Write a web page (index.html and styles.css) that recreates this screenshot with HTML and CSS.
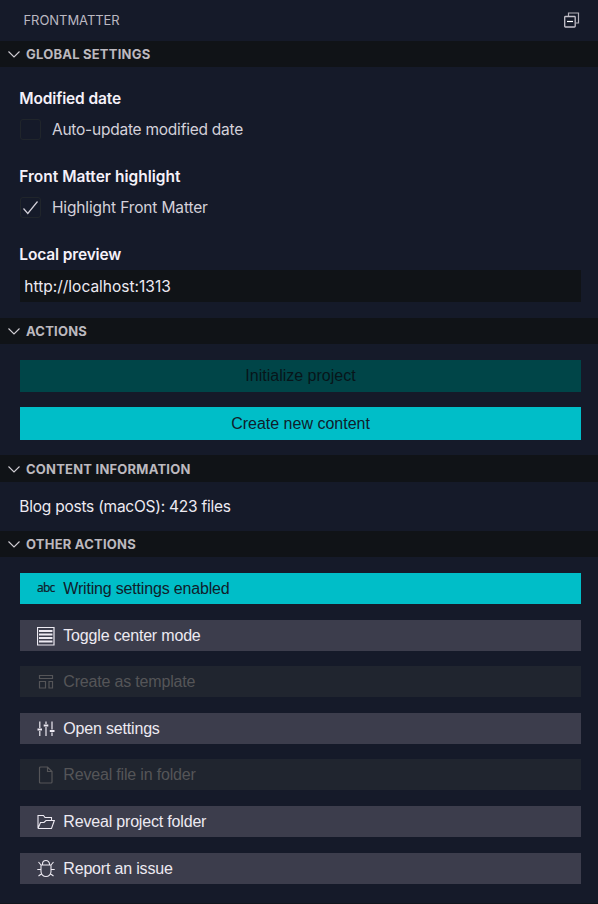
FILE: index.html
```html
<!DOCTYPE html>
<html lang="en">
<head>
<meta charset="utf-8">
<title>Front Matter</title>
<link rel="stylesheet" href="styles.css">
</head>
<body>
<main class="panel">
  <header class="panel-header">
    <span class="panel-title">FRONTMATTER</span>
    <svg class="collapse-all" width="16" height="16" viewBox="0 0 16 16" fill="none"><path d="M4.500 4V1h10v10H12" stroke="#b4b1ba" stroke-width="1.200"/><rect x=".7" y="4.500" width="10.500" height="10.500" rx=".8" stroke="#c5c2cb" stroke-width="1.300"/><path d="M3 9.500h6" stroke="#fff" stroke-width="1.200"/></svg>
  </header>

  <section>
    <h3 class="bar"><svg class="chevron" width="12" height="8" viewBox="0 0 12 8"><path d="M.5 1.500 6 7 11.500 1.500"/></svg><span>GLOBAL SETTINGS</span></h3>
    <div class="settings">
      <div class="setting">
        <h4 class="snug">Modified date</h4>
        <label class="check"><span class="box"></span><span class="tight">Auto-update modified date</span></label>
      </div>
      <div class="setting">
        <h4>Front Matter highlight</h4>
        <label class="check"><span class="box"><svg width="19" height="19" viewBox="0 0 19 19"><path d="m2.500 10.500 4.300 5L16.500 3.500"/></svg></span><span class="snug">Highlight Front Matter</span></label>
      </div>
      <div class="setting">
        <h4 class="snug">Local preview</h4>
        <div class="field"><span>http://localhost:1313</span></div>
      </div>
    </div>
  </section>

  <section>
    <h3 class="bar"><svg class="chevron" width="12" height="8" viewBox="0 0 12 8"><path d="M.5 1.500 6 7 11.500 1.500"/></svg><span>ACTIONS</span></h3>
    <div class="actions">
      <button class="primary off">Initialize project</button>
      <button class="primary tall">Create new content</button>
    </div>
  </section>

  <section>
    <h3 class="bar bar-tall"><svg class="chevron" width="12" height="8" viewBox="0 0 12 8"><path d="M.5 1.500 6 7 11.500 1.500"/></svg><span>CONTENT INFORMATION</span></h3>
    <div class="info"><span class="tight">Blog posts (macOS): 423 files</span></div>
  </section>

  <section>
    <h3 class="bar"><svg class="chevron" width="12" height="8" viewBox="0 0 12 8"><path d="M.5 1.500 6 7 11.500 1.500"/></svg><span>OTHER ACTIONS</span></h3>
    <div class="others">
      <button class="row on"><span class="icon abc">abc</span><span>Writing settings enabled</span></button>
      <button class="row"><svg class="icon" width="18" height="20" viewBox="0 0 18 20"><path d="M.5 1.500h16.500v17.500H.5z" stroke-width="1.200"/><path d="M2 5h13.500M2 8.500h13.500M2 12h13.500M2 15.500h13.500" stroke-width="1.800"/></svg><span>Toggle center mode</span></button>
      <button class="row dim"><svg class="icon" width="18" height="20" viewBox="0 0 18 20"><path d="M2.500 3.500h13v3h-13zM2.500 9.500h6v6.500h-6zM12 9.500h3.500v6.500H12z" stroke-width="1.200"/></svg><span>Create as template</span></button>
      <button class="row"><svg class="icon" width="18" height="20" viewBox="0 0 18 20"><path d="M2.800 2.500v6.500M2.800 12v5M9 2.500V5M9 8v9M15 2.500v8M15 13.500V17" stroke-width="1.200"/><path d="M.5 10.500H5M6.700 6.500h4.600M12.800 12h4.700" stroke-width="2"/></svg><span>Open settings</span></button>
      <button class="row dim"><svg class="icon" width="18" height="20" viewBox="0 0 18 20"><path d="M3.500 2h7l4.500 4.500v10.500q0 1-1 1H3.500q-1 0-1-1V3q0-1 1-1ZM10.500 2v4.500H15" stroke-width="1.200"/></svg><span>Reveal file in folder</span></button>
      <button class="row"><svg class="icon" width="18" height="20" viewBox="0 0 18 20"><path d="M1 16.500v-13h5.500l1.500 2h6.500V8.500M1 16.500h13.500L17.300 8.500H9L7 10.500H3.500L1 16.500"/></svg><span>Reveal project folder</span></button>
      <button class="row"><svg class="icon" width="18" height="20" viewBox="0 0 18 20"><path d="M5.500 6V5a3.500 3.500 0 0 1 7 0v1M4 6h10v6.500a5 5 0 0 1-10 0ZM1.500 3 4 6M16.500 3 14 6M.3 10.500H4M14 10.500h3.700M1.500 17 5 14.500M16.500 17 13 14.500"/></svg><span>Report an issue</span></button>
    </div>
  </section>
</main>
</body>
</html>
```

FILE: styles.css
```css
* { box-sizing: border-box; }
body { margin: 0; background: #151a29; color: #edeaf2; font: 15.5px/20px Inter, sans-serif; }
.panel { height: 904px; overflow: hidden; border-bottom: 1px solid #11151c; }
h3, h4 { margin: 0; }
span { white-space: nowrap; }
.snug { letter-spacing: -.14px; }
.tight { letter-spacing: -.24px; }
.panel-header { height: 41px; display: flex; align-items: center; justify-content: space-between; padding: 0 18px 1px 23.5px; color: #bbb8c1; }
.panel-title { font-size: 13px; letter-spacing: -.05px; }
.bar { height: 26px; display: flex; align-items: center; gap: 6.3px; padding-left: 7.7px; background: #101317; color: #bcb9bf; font-size: 13px; font-weight: 700; letter-spacing: .22px; }
.bar-tall { height: 27px; }
.chevron { fill: none; stroke: #d2cfd5; stroke-width: 1.1; }
.settings { height: 251px; padding: 22px 17px 0 19.3px; }
.setting { height: 78px; }
h4 { font-size: 15.5px; line-height: 20px; font-weight: 600; color: #f5f1f9; }
.check { display: flex; align-items: center; gap: 11px; height: 21px; margin-top: 10px; color: #d4d1da; }
.box { width: 21px; height: 21px; margin-left: .7px; border: 1px solid #20252b; border-radius: 3px; }
.box svg { display: block; fill: none; stroke: #d4d1da; stroke-width: 1.2; }
.field { height: 32px; margin: 5px 0 0 .7px; padding: 7px 4.3px 5px; background: #101317; }
.actions { display: flex; flex-direction: column; gap: 15px; height: 111px; padding: 16px 17px 0 20px; }
button { margin: 0; border: 0; font: 16px/20px "Liberation Sans", Arial, sans-serif; }
.primary { height: 32px; padding: 0; background: #00bec8; color: #10202b; }
.tall { height: 33px; }
.off { background: #004548; color: #07151a; }
.info { height: 49px; padding: 15px 19.3px; }
.others { display: flex; flex-direction: column; padding: 16px 17px 0 20px; }
.row { display: flex; align-items: center; gap: 8.300px; height: 31px; margin-bottom: 16px; padding: 0 17px; background: #3c3d4c; color: #edeaf2; letter-spacing: -.18px; }
.row:nth-child(2), .row:nth-child(4) { margin-bottom: 15px; }
.on { background: #00bec8; color: #10202b; }
.dim { background: #20252f; color: #555558; }
.icon { width: 18px; flex: none; fill: none; stroke: currentColor; stroke-width: 1.1; }
.abc { font: 12px/18px "Noto Sans", sans-serif; letter-spacing: -.8px; text-align: left; position: relative; top: -1px; -webkit-text-stroke: .2px currentColor; }
```
